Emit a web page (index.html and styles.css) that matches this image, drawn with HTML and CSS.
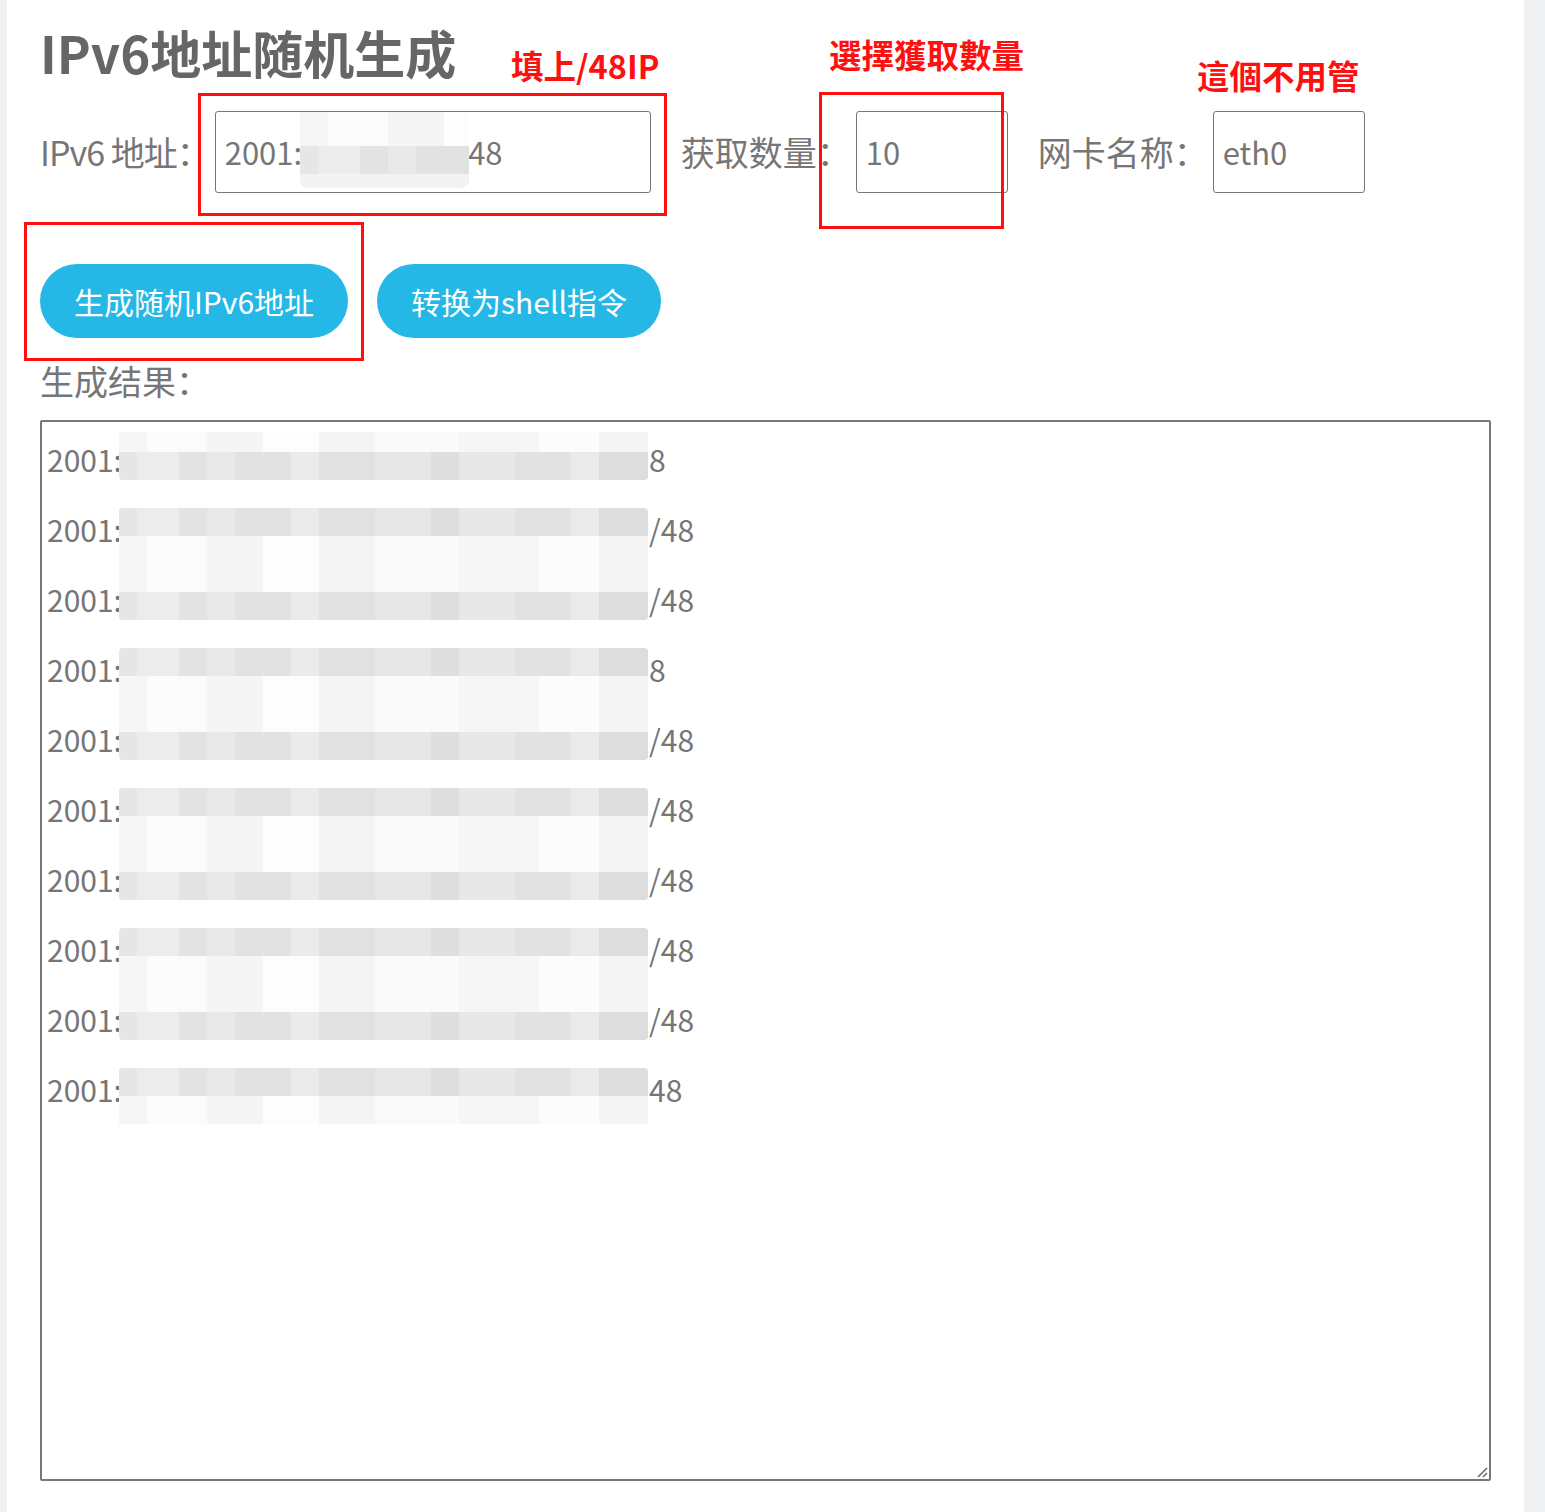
FILE: index.html
```html
<!DOCTYPE html>
<html lang="zh-CN">
<head>
  <meta charset="UTF-8" />
  <meta name="viewport" content="width=device-width, initial-scale=1.0" />
  <title>IPv6地址随机生成</title>
  <link rel="stylesheet" href="styles.css">
</head>
<body>
  <div class="page">
    <h1 class="title">IPv6地址随机生成</h1>

    <div class="form-row">
      <label class="field-label ip-label" for="ipv6">IPv6 地址：</label>
      <div class="input ip-input" id="ipv6">2001:<span class="hidden-part"></span>48
        <span class="mosaic input-mosaic"></span>
      </div>
      <label class="field-label gap-left" for="count">获取数量：</label>
      <div class="input small-input" id="count">10</div>
      <label class="field-label gap-left" for="nic">网卡名称：</label>
      <div class="input small-input" id="nic">eth0</div>
    </div>

    <div class="btn-row">
      <button class="btn">生成随机IPv6地址</button>
      <button class="btn">转换为shell指令</button>
    </div>

    <div class="result-label">生成结果：</div>

    <div class="result-box">
      <div class="line first"><span class="prefix">2001:</span><span class="suffix">8</span><span class="mosaic"></span></div>
      <div class="line even"><span class="prefix">2001:</span><span class="suffix">/48</span><span class="mosaic"></span></div>
      <div class="line odd"><span class="prefix">2001:</span><span class="suffix">/48</span><span class="mosaic"></span></div>
      <div class="line even"><span class="prefix">2001:</span><span class="suffix">8</span><span class="mosaic"></span></div>
      <div class="line odd"><span class="prefix">2001:</span><span class="suffix">/48</span><span class="mosaic"></span></div>
      <div class="line even"><span class="prefix">2001:</span><span class="suffix">/48</span><span class="mosaic"></span></div>
      <div class="line odd"><span class="prefix">2001:</span><span class="suffix">/48</span><span class="mosaic"></span></div>
      <div class="line even"><span class="prefix">2001:</span><span class="suffix">/48</span><span class="mosaic"></span></div>
      <div class="line odd"><span class="prefix">2001:</span><span class="suffix">/48</span><span class="mosaic"></span></div>
      <div class="line even"><span class="prefix">2001:</span><span class="suffix">48</span><span class="mosaic"></span></div>
      <svg class="resize-grip" width="12" height="12" viewBox="0 0 12 12">
        <path d="M2 11 L11 2 M7 11 L11 7" stroke="#666" stroke-width="1.5" fill="none" />
      </svg>
    </div>

    <!-- annotations drawn on top of the screenshot -->
    <div class="note note-ip">填上/48IP</div>
    <div class="note note-count">選擇獲取數量</div>
    <div class="note note-nic">這個不用管</div>
    <div class="mark mark-ip"></div>
    <div class="mark mark-count"></div>
    <div class="mark mark-btn"></div>
  </div>
</body>
</html>
```

FILE: styles.css
```css
:root {
  --text: #767676;
  --title: #666;
  --border: #777;
  --btn: #25b8e6;
  --red: #ff1010;
  --side: #f0f1f3;
  --font: "Noto Sans CJK SC", "Noto Sans", sans-serif;
}

* {
  box-sizing: border-box;
}

body {
  margin: 0;
  background: var(--side);
  font-family: var(--font);
  color: var(--text);
}

.page {
  position: relative;
  width: 1517px;
  min-height: 1512px;
  margin-left: 7px;
  background: #fff;
  padding: 17px 33px 0;
}

.title {
  margin: 0;
  font-size: 51px;
  font-weight: 700;
  line-height: 70px;
  color: var(--title);
  letter-spacing: 0;
}

.form-row {
  display: flex;
  align-items: center;
  margin-top: 24px;
  height: 82px;
}

.field-label {
  font-size: 34px;
  line-height: 1;
  color: var(--text);
  margin-right: 5px;
}

.ip-label {
  letter-spacing: -1px;
  margin-right: 5px;
}

.gap-left {
  margin-left: 30px;
}

.input {
  position: relative;
  height: 82px;
  border: 1.5px solid var(--border);
  border-radius: 3px;
  font-size: 31px;
  line-height: 79px;
  padding-left: 9px;
  color: var(--text);
  white-space: nowrap;
  overflow: hidden;
}

.ip-input {
  width: 436px;
}

.small-input {
  width: 152px;
}

.hidden-part {
  display: inline-block;
  width: 166px;
}

.btn-row {
  display: flex;
  gap: 29px;
  margin-top: 71px;
}

.btn {
  height: 74px;
  border: none;
  border-radius: 37px;
  background: var(--btn);
  color: #fff;
  font-family: var(--font);
  font-size: 30px;
  padding: 0 34px;
  cursor: pointer;
}

.result-label {
  font-size: 34px;
  line-height: 1;
  margin-top: 26px;
  color: var(--text);
}

.result-box {
  position: relative;
  margin-top: 22px;
  width: 1451px;
  height: 1061px;
  border: 2px solid var(--border);
  border-radius: 2px;
  padding: 2px 5px;
}

.line {
  position: relative;
  height: 70px;
  font-size: 30px;
  line-height: 70px;
  color: var(--text);
  white-space: nowrap;
}

.prefix {
  display: inline-block;
  width: 602px;
}

.mosaic {
  position: absolute;
  left: 72px;
  width: 529px;
  height: 56px;
  border-radius: 4px;
  background:
    linear-gradient(90deg,
      #e6e6e6 0 18px, #ececec 18px 60px, #e3e3e3 60px 88px, #e9e9e9 88px 116px,
      #e2e2e2 116px 172px, #ebebeb 172px 200px, #e1e1e1 200px 256px,
      #e7e7e7 256px 312px, #dedede 312px 340px, #e8e8e8 340px 396px,
      #e2e2e2 396px 452px, #eaeaea 452px 480px, #dddddd 480px 529px);
}

.line .mosaic::after,
.input-mosaic::after {
  content: "";
  position: absolute;
  left: 0;
  right: 0;
  height: 28px;
  background:
    linear-gradient(90deg,
      #f6f6f6 0 28px, #fbfbfb 28px 88px, #f5f5f5 88px 144px, #fdfdfd 144px 200px,
      #f4f4f4 200px 256px, #fafafa 256px 340px, #f6f6f6 340px 420px,
      #fcfcfc 420px 480px, #f5f5f5 480px 529px);
}

.line.first .mosaic {
  top: 8px;
  height: 48px;
}

.line.first .mosaic::after {
  top: 0;
  height: 20px;
}

.line.odd .mosaic {
  top: 0;
}

.line.odd .mosaic::after {
  top: 0;
}

.line.even .mosaic {
  top: 14px;
}

.line.even .mosaic::after {
  bottom: 0;
}

.input-mosaic {
  position: absolute;
  left: 84px;
  top: 0;
  width: 169px;
  height: 76px;
  border-radius: 8px;
}

.input-mosaic::after {
  top: 0;
  height: 34px;
}

.input-mosaic::before {
  content: "";
  position: absolute;
  left: 0;
  right: 0;
  bottom: 0;
  height: 14px;
  background: #f3f3f3;
  border-radius: 0 0 8px 8px;
}

.resize-grip {
  position: absolute;
  right: 1px;
  bottom: 1px;
}

/* red annotation text and boxes */
.note {
  position: absolute;
  font-size: 32.5px;
  font-weight: 700;
  color: var(--red);
  line-height: 1;
  white-space: nowrap;
}

.note-ip {
  left: 504px;
  top: 49px;
}

.note-count {
  left: 822px;
  top: 38px;
}

.note-nic {
  left: 1190px;
  top: 59px;
}

.mark {
  position: absolute;
  border: 3px solid var(--red);
}

.mark-ip {
  left: 191px;
  top: 93px;
  width: 469px;
  height: 123px;
}

.mark-count {
  left: 812px;
  top: 92px;
  width: 185px;
  height: 137px;
}

.mark-btn {
  left: 17px;
  top: 222px;
  width: 340px;
  height: 139px;
}
```
